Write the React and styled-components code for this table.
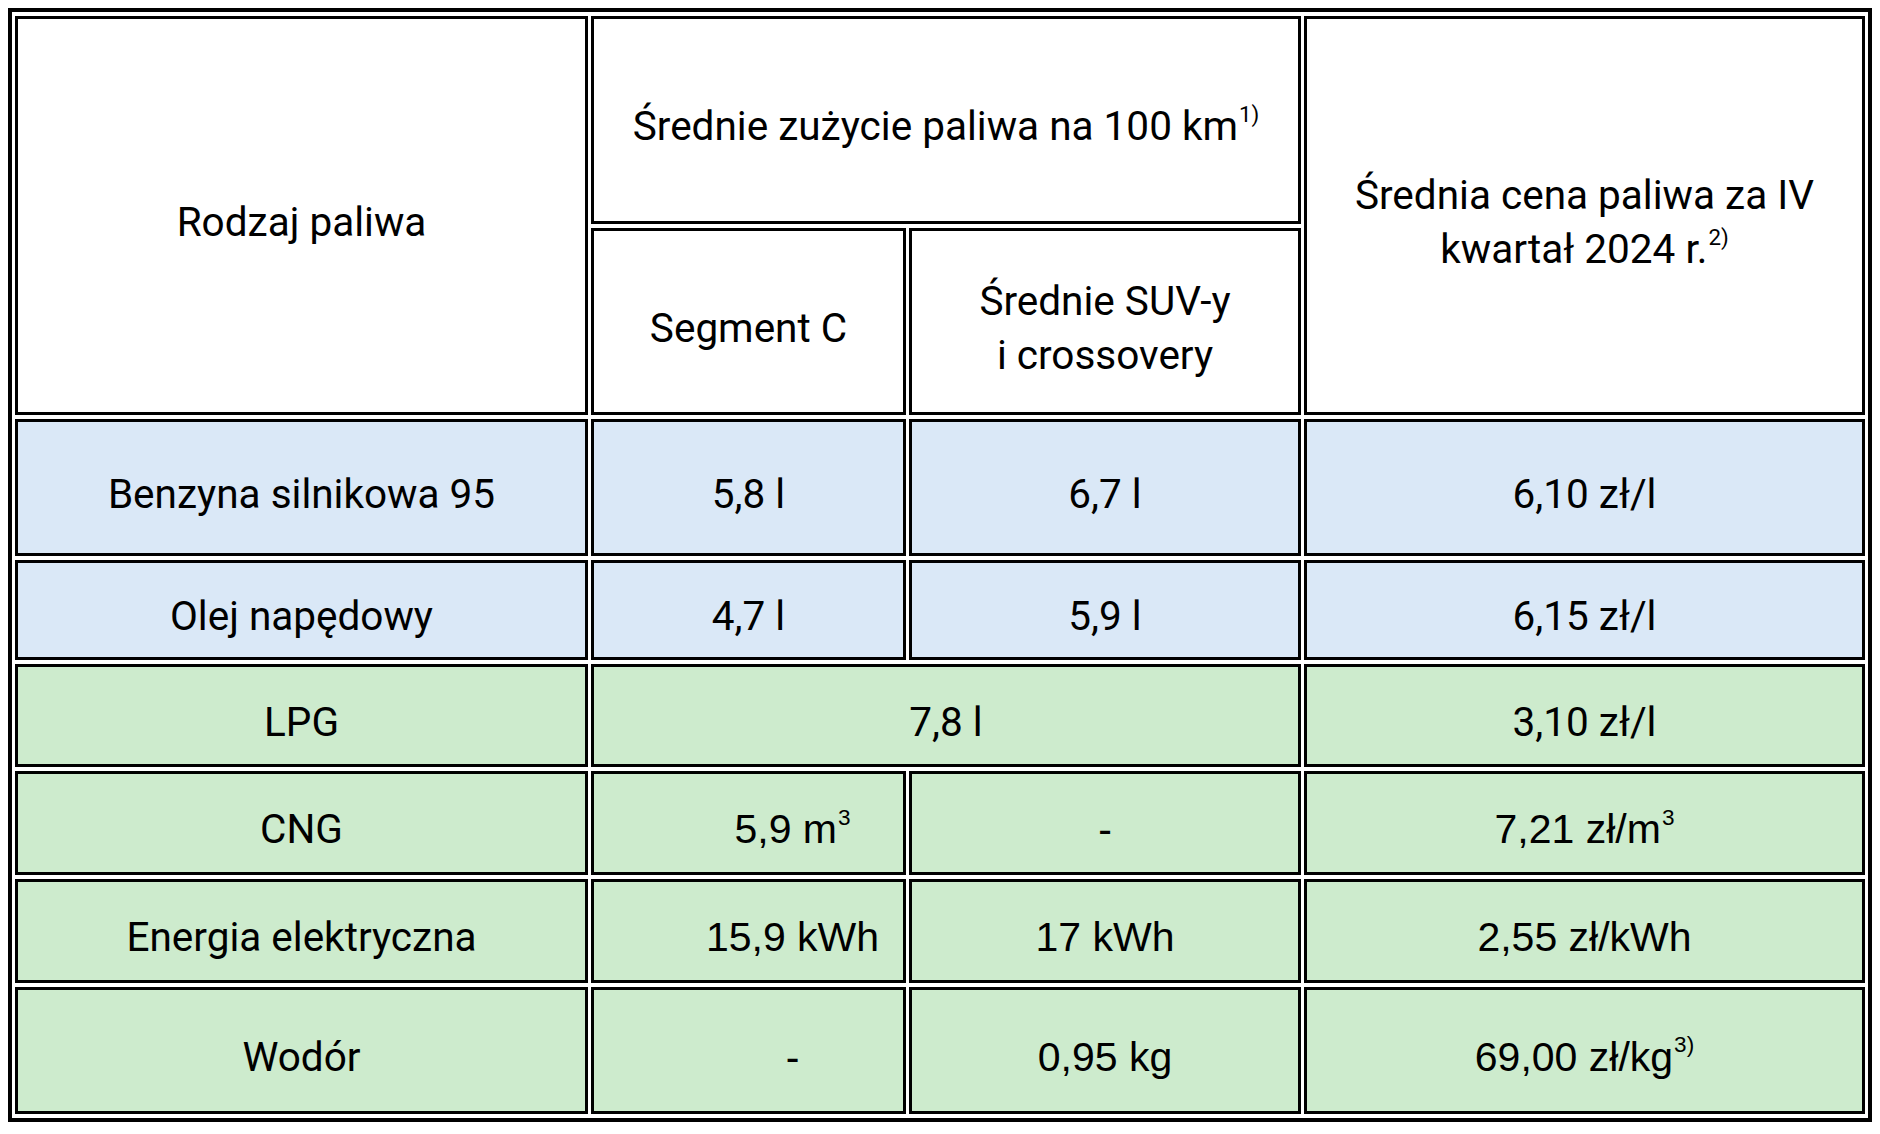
import styled, { createGlobalStyle } from 'styled-components';

const GlobalStyle = createGlobalStyle`
    html, body {
        background: #fff;
    }
    body {
        margin: 8px;
        font-family: Roboto, "Noto Sans", sans-serif;
        color: #000;
    }
`

const Table = styled.table`
    width: 100%;
    table-layout: fixed;
    border-collapse: separate;
    border-spacing: 3px 4px;
    border: 4px solid #000;
    background: #fff;
`

const Row = styled.tr`
    height: ${p => p.$h}px;
`

const Cell = styled.td`
    border: 3px solid #000;
    background: ${p => p.$bg || '#fff'};
    padding: 12px 8px 0 ${p => 8 + (p.$shift || 0)}px;
    text-align: center;
    vertical-align: middle;
    font-family: ${p => p.$arial ? '"Liberation Sans", Arial, sans-serif' : 'Roboto, "Noto Sans", sans-serif'};
    font-weight: 400;
    font-size: ${p => p.$arial ? 41 : 40.5}px;
    line-height: 54px;
    color: #000;
`

const Sup = styled.span`
    font-size: 0.55em;
    line-height: 0;
    position: relative;
    top: -0.8em;
    margin-left: 1px;
`

const BLUE = '#dae8f7';
const GREEN = '#cdebcd';

const rows = [
    { name: 'Benzyna silnikowa 95', h: 137, bg: BLUE, c: '5,8 l', s: '6,7 l', price: '6,10 zł/l' },
    { name: 'Olej napędowy', h: 100, bg: BLUE, c: '4,7 l', s: '5,9 l', price: '6,15 zł/l' },
    { name: 'LPG', h: 103, bg: GREEN, both: '7,8 l', price: '3,10 zł/l' },
    { name: 'CNG', h: 104, bg: GREEN, c: <>5,9 m<Sup>3</Sup></>, s: '-', price: <>7,21 zł/m<Sup>3</Sup></>, arial: true },
    { name: 'Energia elektryczna', h: 104, bg: GREEN, c: '15,9 kWh', s: '17 kWh', price: '2,55 zł/kWh', arial: true },
    { name: 'Wodór', h: 127, bg: GREEN, c: '-', s: '0,95 kg', price: <>69,00 zł/kg<Sup>3)</Sup></>, arial: true },
];

function App() {
    return (
        <>
            <GlobalStyle />
            <Table>
                <colgroup>
                    <col style={{ width: 573 }} />
                    <col style={{ width: 315 }} />
                    <col style={{ width: 392 }} />
                    <col style={{ width: 561 }} />
                </colgroup>
                <thead>
                    <Row $h={208}>
                        <Cell as="th" rowSpan={2}>Rodzaj paliwa</Cell>
                        <Cell as="th" colSpan={2}>Średnie zużycie paliwa na 100 km<Sup>1)</Sup></Cell>
                        <Cell as="th" rowSpan={2}>Średnia cena paliwa za IV<br />kwartał 2024 r.<Sup>2)</Sup></Cell>
                    </Row>
                    <Row $h={187}>
                        <Cell as="th">Segment C</Cell>
                        <Cell as="th">Średnie SUV-y<br />i crossovery</Cell>
                    </Row>
                </thead>
                <tbody>
                    {rows.map((r, i) => (
                        <Row key={i} $h={r.h}>
                            <Cell $bg={r.bg}>{r.name}</Cell>
                            {r.both ? (
                                <Cell $bg={r.bg} colSpan={2}>{r.both}</Cell>
                            ) : (
                                <>
                                    <Cell $bg={r.bg} $arial={r.arial} $shift={r.arial ? 88 : 0}>{r.c}</Cell>
                                    <Cell $bg={r.bg} $arial={r.arial}>{r.s}</Cell>
                                </>
                            )}
                            <Cell $bg={r.bg} $arial={r.arial}>{r.price}</Cell>
                        </Row>
                    ))}
                </tbody>
            </Table>
        </>
    );
}

export default App;
